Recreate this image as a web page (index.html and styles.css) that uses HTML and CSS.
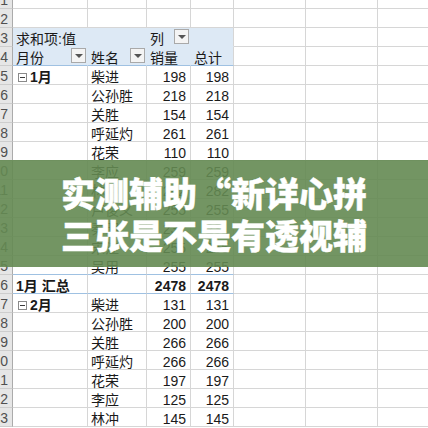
FILE: index.html
```html
<!DOCTYPE html>
<html lang="zh-CN">
<head>
<meta charset="utf-8">
<title>数据透视表</title>
<link rel="stylesheet" href="styles.css">
</head>
<body>
<div class="sheet">
  <div class="row"><div class="rh">1</div><div class="c"></div><div class="c"></div><div class="c"></div><div class="c"></div><div class="c"></div><div class="c"></div><div class="c"></div></div>
  <div class="row"><div class="rh">2</div><div class="c"></div><div class="c"></div><div class="c"></div><div class="c"></div><div class="c"></div><div class="c"></div><div class="c"></div></div>
  <div class="row"><div class="rh">3</div><div class="c hd span2">求和项:值</div><div class="c hd dd"><span>列</span><span class="btn"></span></div><div class="c hd last"></div><div class="c"></div><div class="c"></div><div class="c"></div></div>
  <div class="row hrow"><div class="rh">4</div><div class="c hd dd"><span>月份</span><span class="btn"></span></div><div class="c hd dd"><span>姓名</span><span class="btn"></span></div><div class="c hd">销量</div><div class="c hd last">总计</div><div class="c"></div><div class="c"></div><div class="c"></div></div>
  <div class="row"><div class="rh">5</div><div class="c b"><span class="tog"></span>1月</div><div class="c">柴进</div><div class="c n">198</div><div class="c n">198</div><div class="c"></div><div class="c"></div><div class="c"></div></div>
  <div class="row"><div class="rh">6</div><div class="c"></div><div class="c">公孙胜</div><div class="c n">218</div><div class="c n">218</div><div class="c"></div><div class="c"></div><div class="c"></div></div>
  <div class="row"><div class="rh">7</div><div class="c"></div><div class="c">关胜</div><div class="c n">154</div><div class="c n">154</div><div class="c"></div><div class="c"></div><div class="c"></div></div>
  <div class="row"><div class="rh">8</div><div class="c"></div><div class="c">呼延灼</div><div class="c n">261</div><div class="c n">261</div><div class="c"></div><div class="c"></div><div class="c"></div></div>
  <div class="row"><div class="rh">9</div><div class="c"></div><div class="c">花荣</div><div class="c n">110</div><div class="c n">110</div><div class="c"></div><div class="c"></div><div class="c"></div></div>
  <div class="row"><div class="rh">10</div><div class="c"></div><div class="c">李应</div><div class="c n">259</div><div class="c n">259</div><div class="c"></div><div class="c"></div><div class="c"></div></div>
  <div class="row"><div class="rh">11</div><div class="c"></div><div class="c">林冲</div><div class="c n">282</div><div class="c n">282</div><div class="c"></div><div class="c"></div><div class="c"></div></div>
  <div class="row"><div class="rh">12</div><div class="c"></div><div class="c">卢俊义</div><div class="c n">255</div><div class="c n">255</div><div class="c"></div><div class="c"></div><div class="c"></div></div>
  <div class="row"><div class="rh">13</div><div class="c"></div><div class="c">秦明</div><div class="c n">231</div><div class="c n">231</div><div class="c"></div><div class="c"></div><div class="c"></div></div>
  <div class="row"><div class="rh">14</div><div class="c"></div><div class="c">宋江</div><div class="c n">255</div><div class="c n">255</div><div class="c"></div><div class="c"></div><div class="c"></div></div>
  <div class="row"><div class="rh">15</div><div class="c pt"></div><div class="c pt">吴用</div><div class="c n pt">255</div><div class="c n pt">255</div><div class="c"></div><div class="c"></div><div class="c"></div></div>
  <div class="row"><div class="rh">16</div><div class="c b pt">1月 汇总</div><div class="c pt"></div><div class="c n b pt">2478</div><div class="c n b pt">2478</div><div class="c"></div><div class="c"></div><div class="c"></div></div>
  <div class="row"><div class="rh">17</div><div class="c b"><span class="tog"></span>2月</div><div class="c">柴进</div><div class="c n">131</div><div class="c n">131</div><div class="c"></div><div class="c"></div><div class="c"></div></div>
  <div class="row"><div class="rh">18</div><div class="c"></div><div class="c">公孙胜</div><div class="c n">200</div><div class="c n">200</div><div class="c"></div><div class="c"></div><div class="c"></div></div>
  <div class="row"><div class="rh">19</div><div class="c"></div><div class="c">关胜</div><div class="c n">266</div><div class="c n">266</div><div class="c"></div><div class="c"></div><div class="c"></div></div>
  <div class="row"><div class="rh">20</div><div class="c"></div><div class="c">呼延灼</div><div class="c n">266</div><div class="c n">266</div><div class="c"></div><div class="c"></div><div class="c"></div></div>
  <div class="row"><div class="rh">21</div><div class="c"></div><div class="c">花荣</div><div class="c n">197</div><div class="c n">197</div><div class="c"></div><div class="c"></div><div class="c"></div></div>
  <div class="row"><div class="rh">22</div><div class="c"></div><div class="c">李应</div><div class="c n">125</div><div class="c n">125</div><div class="c"></div><div class="c"></div><div class="c"></div></div>
  <div class="row"><div class="rh">23</div><div class="c"></div><div class="c">林冲</div><div class="c n">145</div><div class="c n">145</div><div class="c"></div><div class="c"></div><div class="c"></div></div>
</div>
<div class="banner">
  <p class="title">实测辅助“新详心拼<br>三张是不是有透视辅</p>
</div>
</body>
</html>
```
FILE: styles.css
```css
* { box-sizing: border-box; }
html, body {
  margin: 0;
  height: 428px;
  overflow: hidden;
  background: #fff;
}
body {
  position: relative;
  font-family: "Liberation Sans", "Noto Sans CJK SC", sans-serif;
  font-size: 14px;
  color: #1a1a1a;
}
.sheet {
  margin-top: -10px;
  width: 450px;
}
.row {
  display: grid;
  grid-template-columns: 13px 75px 59px 44px 43px 72px 72px 72px;
  height: 19px;
}
.rh {
  background: #e6e6e6;
  border-right: 1px solid #ababab;
  border-bottom: 1px solid #cdcdcd;
  color: #505050;
  font-size: 14px;
  line-height: 15px;
  padding: 3px 4px 0 0;
  direction: rtl;
  text-align: right;
  overflow: hidden;
  white-space: nowrap;
}
.c {
  border-right: 1px solid #d6d6d6;
  border-bottom: 1px solid #d6d6d6;
  padding: 4px 3px 0;
  line-height: 14px;
  white-space: nowrap;
}
.n { text-align: right; padding-right: 4px; }
.b { font-weight: bold; }
.hd {
  background: #dde9f5;
  border-right-color: #dde9f5;
  border-bottom-color: #dde9f5;
}
.hd.last { border-right-color: #d6d6d6; }
.hrow .hd { border-bottom-color: #9fc1e2; }
.span2 { grid-column: span 2; }
.dd {
  display: flex;
  justify-content: space-between;
  align-items: flex-start;
  padding-right: 1px;
}
.btn {
  width: 15px;
  height: 15px;
  margin-top: -3px;
  border: 1px solid #a9a9a9;
  background: #f4f4f4;
  display: flex;
  align-items: center;
  justify-content: center;
}
.btn::after {
  content: "";
  border-left: 4px solid transparent;
  border-right: 4px solid transparent;
  border-top: 4px solid #555;
  margin-top: 1px;
}
.tog {
  display: inline-block;
  width: 9px;
  height: 9px;
  border: 1px solid #8a8a8a;
  background: #fff;
  margin: 0 3px 0 2px;
  vertical-align: 0;
  position: relative;
}
.tog::after {
  content: "";
  position: absolute;
  left: 1px;
  right: 1px;
  top: 3px;
  height: 1px;
  background: #3a3a3a;
}
.pt { border-bottom-color: #9fc1e2; }
.banner {
  position: absolute;
  left: 0;
  right: 0;
  top: 160px;
  height: 107px;
  background: rgba(100, 138, 82, 0.9);
  display: flex;
  align-items: center;
  justify-content: center;
}
.title {
  margin: 0;
  color: #fff;
  font-family: "Noto Sans CJK SC", sans-serif;
  font-weight: 900;
  font-size: 34px;
  line-height: 42px;
  text-align: center;
  -webkit-text-stroke: 0.4px #fff;
}
```
